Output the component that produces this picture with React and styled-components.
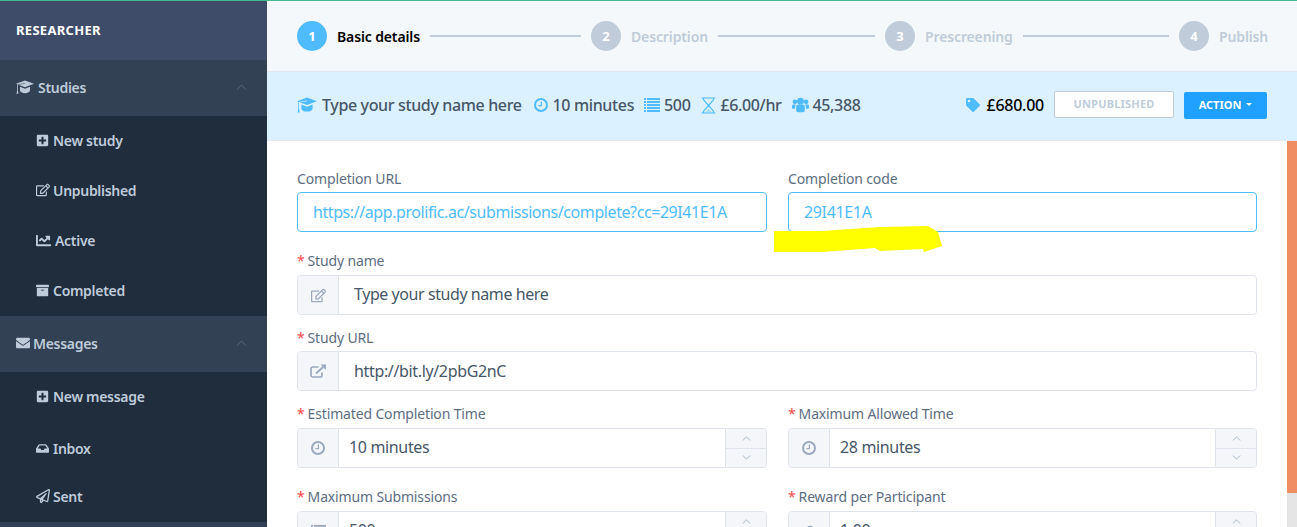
import React from "react";
import styled, { createGlobalStyle } from "styled-components";
import {
  FaPlusSquare, FaRegEdit, FaChartLine, FaArchive, FaEnvelope,
  FaInbox, FaRegPaperPlane, FaTag, FaPoundSign,
} from "react-icons/fa";

const Global = createGlobalStyle`
  html, body { margin: 0; padding: 0; height: 100%; overflow: hidden; }
  body { font-family: "Noto Sans", "Open Sans", sans-serif; background: #fff; }
  * { box-sizing: border-box; }
`;

const Page = styled.div`
  position: relative;
  width: 1297px;
  height: 527px;
  overflow: hidden;
  display: flex;
  border-top: 1px solid #42b98f;
`;
const Sidebar = styled.aside`
  width: 267px;
  flex: none;
  background: #1f2d3d;
  display: flex;
  flex-direction: column;
`;
const Brand = styled.div`
  height: 59px;
  flex: none;
  display: flex;
  align-items: center;
  padding: 0 0 1px 16px;
  background: #3e4c69;
  color: #fff;
  font-size: 13px;
  font-weight: 700;
  letter-spacing: 0.3px;
`;
const Group = styled.div`
  height: 56px;
  flex: none;
  display: flex;
  align-items: center;
  padding: 0 20px 2px 16px;
  background: #324153;
  color: #bfcbd9;
  font-size: 14px;
  font-weight: 600;
  letter-spacing: -0.3px;
  gap: ${(p) => p.$gap}px;
  & > span { flex: 1; }
`;
const Item = styled.div`
  height: ${(p) => p.$h}px;
  flex: none;
  display: flex;
  align-items: center;
  padding: 0 0 ${(p) => p.$pb ?? 2}px 36px;
  gap: ${(p) => p.$gap ?? 4}px;
  color: #bfcbd9;
  font-size: 14px;
  font-weight: 600;
  letter-spacing: -0.3px;
`;
const Foot = styled.div`
  flex: 1;
  background: #324055;
`;
const Main = styled.main`
  flex: 1;
  min-width: 0;
  display: flex;
  flex-direction: column;
`;
const Stepper = styled.div`
  height: 70px;
  flex: none;
  background: #f4f8fb;
  display: flex;
  align-items: center;
  padding: 0 30px;
`;
const Step = styled.div`
  display: flex;
  align-items: center;
  flex: ${(p) => (p.$last ? "none" : "0 0 294px")};
`;
const Circle = styled.div`
  width: 30px;
  height: 30px;
  border-radius: 50%;
  flex: none;
  display: flex;
  align-items: center;
  justify-content: center;
  color: #fff;
  font-size: 13px;
  font-weight: 700;
  background: ${(p) => (p.$active ? "#4fbcff" : "#c0ccda")};
`;
const StepLabel = styled.div`
  margin-left: 10px;
  font-size: 14px;
  font-weight: 600;
  letter-spacing: -0.13px;
  white-space: nowrap;
  color: ${(p) => (p.$active ? "#000" : "#c0ccda")};
`;
const StepLine = styled.div`
  flex: 1;
  height: 2px;
  margin: 0 10px;
  background: #c0ccda;
`;
const InfoBar = styled.div`
  height: 70px;
  flex: none;
  background: #dbf1ff;
  border-top: 1px solid #dfe6ee;
  border-bottom: 1px solid #e4e9ef;
  display: flex;
  align-items: center;
  padding: 0 30px 2px;
  color: #475669;
  font-size: 16px;
  font-weight: 500;
  letter-spacing: -0.36px;
`;
const Fact = styled.div`
  display: flex;
  align-items: center;
  gap: ${(p) => p.$gap ?? 5}px;
  margin-right: ${(p) => p.$mr ?? 10}px;
  color: #475669;
  white-space: nowrap;
  svg { color: #4fbcff; flex: none; }
`;
const Spacer = styled.div`
  flex: 1;
`;
const Price = styled.div`
  display: flex;
  align-items: center;
  gap: 6px;
  color: #000;
  margin-right: 10px;
  letter-spacing: -0.25px;
  svg { color: #4fbcff; }
`;
const StatusBox = styled.div`
  width: 120px;
  height: 27px;
  border: 1px solid #c0ccda;
  border-radius: 2px;
  background: #fff;
  color: #c0ccda;
  display: flex;
  align-items: center;
  justify-content: center;
  padding-bottom: 2px;
  font-size: 11px;
  font-weight: 700;
  letter-spacing: 0.2px;
  margin: 0 10px 2px 0;
`;
const ActionButton = styled.div`
  width: 83px;
  height: 27px;
  border-radius: 2px;
  background: #20a0ff;
  color: #fff;
  display: flex;
  align-items: center;
  justify-content: center;
  padding-bottom: 2px;
  gap: 5px;
  font-size: 11px;
  font-weight: 700;
  letter-spacing: 0;
`;
const Caret = styled.i`
  width: 0;
  height: 0;
  border-left: 3.5px solid transparent;
  border-right: 3.5px solid transparent;
  border-top: 3.5px solid #fff;
`;
const Body = styled.div`
  flex: 1;
  min-height: 0;
  display: flex;
`;
const Form = styled.div`
  flex: 1;
  min-width: 0;
  padding: 29px 30px 0;
  overflow: hidden;
`;
const Row = styled.div`
  display: grid;
  grid-template-columns: ${(p) => (p.$single ? "1fr" : "470px 469px")};
  column-gap: 21px;
  margin-bottom: ${(p) => p.$mb}px;
`;
const Field = styled.div`
  display: flex;
  flex-direction: column;
  min-width: 0;
`;
const Label = styled.label`
  height: ${(p) => p.$h ?? 23}px;
  padding-top: ${(p) => p.$pt ?? 0}px;
  font-size: 14px;
  line-height: 18px;
  color: #5e6d82;
  letter-spacing: -0.15px;
  white-space: nowrap;
  b { color: #ff4949; font-weight: 400; margin-right: 3px; }
`;
const Box = styled.div`
  height: 40px;
  display: flex;
  border: 1px solid ${(p) => (p.$focus ? "#4fbcff" : "#dfe3ec")};
  border-radius: 4px;
  overflow: hidden;
  background: #fff;
`;
const Addon = styled.div`
  width: 41px;
  flex: none;
  display: flex;
  align-items: center;
  justify-content: center;
  background: #f4f6fa;
  border-right: 1px solid #dfe3ec;
  color: #99a9bf;
`;
const Value = styled.div`
  flex: 1;
  display: flex;
  align-items: center;
  padding: 0 0 ${(p) => p.$pb ?? 0}px ${(p) => p.$pl}px;
  font-size: 16px;
  letter-spacing: ${(p) => p.$ls ?? -0.35}px;
  white-space: nowrap;
  color: ${(p) => (p.$focus ? "#4fbcff" : "#475669")};
`;
const Spin = styled.div`
  width: 41px;
  flex: none;
  display: flex;
  flex-direction: column;
  border-left: 1px solid #dfe3ec;
  background: #f4f6fa;
`;
const SpinBtn = styled.div`
  flex: 1;
  display: flex;
  align-items: center;
  justify-content: center;
  & + & { border-top: 1px solid #dfe3ec; }
`;
const Track = styled.div`
  width: 10px;
  flex: none;
  background: #e5e5e5;
`;
const Thumb = styled.div`
  height: 352px;
  background: #f08d63;
`;
const Highlight = styled.svg`
  position: absolute;
  left: 0;
  top: -1px;
  pointer-events: none;
`;

const Cap = ({ w = 18 }) => (
  <svg width={w} height={w * 0.8} viewBox="0 0 20 16" fill="currentColor">
    <path d="M10 .5L20 4.2L10 8L2.6 5.2L10 4.3L9.8 3.6L1.6 4.9L0 4.2Z" />
    <path d="M4.4 7.6L10 9.7L15.6 7.6V11.4C15.6 13.2 13 14.6 10 14.6C7 14.6 4.4 13.2 4.4 11.4Z" />
    <path d="M1.2 5.4H2V11.6L2.7 15.4H.6L1.2 11.6Z" />
  </svg>
);
const Clock = ({ size = 14, w = 2 }) => (
  <svg width={size} height={size} viewBox="0 0 14 14" fill="none" stroke="currentColor">
    <circle cx="7" cy="7" r={7 - w / 2} strokeWidth={w} />
    <path d="M7.4 3.4V7.6H4.4" strokeWidth="1.2" />
  </svg>
);
const Lines = ({ size = 16 }) => (
  <svg width={size} height={size} viewBox="0 0 16 16" fill="currentColor">
    {[2, 5, 8, 11, 14].map((y) => (
      <g key={y}>
        <rect x="0" y={y - 1} width="2" height="2" />
        <rect x="3" y={y - 1} width="13" height="2" />
      </g>
    ))}
  </svg>
);
const Hourglass = () => (
  <svg width="15" height="17" viewBox="0 0 15 17" fill="none" stroke="currentColor" strokeWidth="1.2">
    <path d="M.5 1H14.5M.5 16H14.5M2.5 1V2.8L7.5 8.5L2.5 14.2V16M12.5 1V2.8L7.5 8.5L12.5 14.2V16" />
    <path d="M4 15.4L7.5 11.6L11 15.4Z" fill="currentColor" fillOpacity="0.35" stroke="none" />
  </svg>
);
const Users = () => (
  <svg width="17" height="16" viewBox="0 0 18 16" fill="currentColor">
    <circle cx="9" cy="4" r="3.6" />
    <circle cx="3.1" cy="4.6" r="2.5" />
    <circle cx="14.9" cy="4.6" r="2.5" />
    <path d="M4.4 10.2C4.4 8.4 5.6 7.6 6.4 7.6H11.6C12.4 7.6 13.6 8.4 13.6 10.2V13.8C13.6 15.1 12 15.8 9 15.8C6 15.8 4.4 15.1 4.4 13.8Z" />
    <path d="M0 8.8C0 8 .8 7.4 1.6 7.4H4.2C3.6 8.2 3.3 9.1 3.3 10.2V12H1.2C.5 12 0 11.5 0 10.9Z" />
    <path d="M18 8.8C18 8 17.2 7.4 16.4 7.4H13.8C14.4 8.2 14.7 9.1 14.7 10.2V12H16.8C17.5 12 18 11.5 18 10.9Z" />
  </svg>
);
const ExternalLink = () => (
  <svg width="17" height="14" viewBox="0 0 17 14">
    <path d="M12 8.5V11.2A1.8 1.8 0 0 1 10.2 13H2.8A1.8 1.8 0 0 1 1 11.2V4.8A1.8 1.8 0 0 1 2.8 3H8.5" fill="none" stroke="currentColor" strokeWidth="1.7" />
    <path d="M6 9.5L13.2 3" fill="none" stroke="currentColor" strokeWidth="1.8" />
    <path d="M10.5 .5H16V6Z" fill="currentColor" />
  </svg>
);
const Chevron = ({ up, c = "#99a9bf", w = 11 }) => (
  <svg width={w} height={w * 0.55} viewBox="0 0 11 6" fill="none" stroke={c} strokeWidth="1">
    <path d={up ? "M1 5.5L5.5 1L10 5.5" : "M1 .5L5.5 5L10 .5"} />
  </svg>
);

const Spinner = () => (
  <Spin>
    <SpinBtn><Chevron up w={9} /></SpinBtn>
    <SpinBtn><Chevron w={9} /></SpinBtn>
  </Spin>
);

const steps = ["Basic details", "Description", "Prescreening", "Publish"];

const Req = ({ children, pt }) => (
  <Label $pt={pt}><b>*</b>{children}</Label>
);

const NumField = ({ label, icon, value }) => (
  <Field>
    <Req>{label}</Req>
    <Box>
      <Addon>{icon}</Addon>
      <Value $pl={10} $pb={2}>{value}</Value>
      <Spinner />
    </Box>
  </Field>
);

export default function App() {
  return (
    <Page>
      <Global />
      <Sidebar>
        <Brand>RESEARCHER</Brand>
        <Group $gap={4}><Cap /><span>Studies</span><Chevron up c="#5a6a80" w={11} /></Group>
        <Item $h={50}><FaPlusSquare size={13} />New study</Item>
        <Item $h={50} $gap={3}><FaRegEdit size={14} />Unpublished</Item>
        <Item $h={50}><FaChartLine size={15} />Active</Item>
        <Item $h={50}><FaArchive size={13} />Completed</Item>
        <Group $gap={3}><FaEnvelope size={14} /><span>Messages</span><Chevron up c="#5a6a80" w={11} /></Group>
        <Item $h={50}><FaPlusSquare size={13} />New message</Item>
        <Item $h={52} $pb={0}><FaInbox size={13} />Inbox</Item>
        <Item $h={48} $gap={3} $pb={4}><FaRegPaperPlane size={14} />Sent</Item>
        <Foot />
      </Sidebar>
      <Main>
        <Stepper>
          {steps.map((s, i) => (
            <Step key={s} $last={i === 3}>
              <Circle $active={i === 0}>{i + 1}</Circle>
              <StepLabel $active={i === 0}>{s}</StepLabel>
              {i < 3 && <StepLine />}
            </Step>
          ))}
        </Stepper>
        <InfoBar>
          <Fact $mr={12}><Cap w={20} />Type your study name here</Fact>
          <Fact $mr={10}><Clock />10 minutes</Fact>
          <Fact $mr={11} $gap={4}><Lines />500</Fact>
          <Fact $mr={10} $gap={4}><Hourglass />£6.00/hr</Fact>
          <Fact $gap={4}><Users />45,388</Fact>
          <Spacer />
          <Price><FaTag size={14} />£680.00</Price>
          <StatusBox>UNPUBLISHED</StatusBox>
          <ActionButton>ACTION<Caret /></ActionButton>
        </InfoBar>
        <Body>
          <Form>
            <Row $mb={20}>
              <Field>
                <Label $h={22}>Completion URL</Label>
                <Box $focus><Value $focus $pl={15} $ls={-0.42}>https://app.prolific.ac/submissions/complete?cc=29I41E1A</Value></Box>
              </Field>
              <Field>
                <Label $h={22}>Completion code</Label>
                <Box $focus><Value $focus $pl={15}>29I41E1A</Value></Box>
              </Field>
            </Row>
            <Row $single $mb={13}>
              <Field>
                <Req>Study name</Req>
                <Box><Addon><FaRegEdit size={15} /></Addon><Value $pl={15} $pb={2} $ls={-0.43}>Type your study name here</Value></Box>
              </Field>
            </Row>
            <Row $single $mb={14}>
              <Field>
                <Req pt={1}>Study URL</Req>
                <Box><Addon><ExternalLink /></Addon><Value $pl={15}>http://bit.ly/2pbG2nC</Value></Box>
              </Field>
            </Row>
            <Row $mb={20}>
              <NumField label="Estimated Completion Time" icon={<Clock />} value="10 minutes" />
              <NumField label="Maximum Allowed Time" icon={<Clock />} value="28 minutes" />
            </Row>
            <Row $mb={0}>
              <NumField label="Maximum Submissions" icon={<Lines size={15} />} value="500" />
              <NumField label="Reward per Participant" icon={<FaPoundSign size={13} />} value="1.00" />
            </Row>
          </Form>
          <Track><Thumb /></Track>
        </Body>
      </Main>
      <Highlight width="1297" height="527" viewBox="0 0 1297 527">
        <path fill="#ffff00" d="M774 231L822 231L880 227L928 226L938 232L942 246L924 252L923 249L880 251L875 248L822 252L774 252Z" />
      </Highlight>
    </Page>
  );
}
